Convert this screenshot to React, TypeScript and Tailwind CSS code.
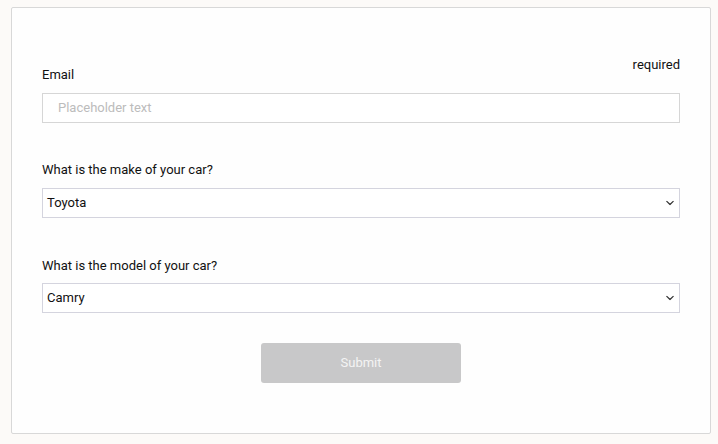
import React from "react";

function Chevron() {
  return (
    <svg width="8" height="5" viewBox="0 0 8 5" fill="none" className="absolute right-[5px] top-1/2 -translate-y-1/2">
      <path d="M0.8 0.8l3.2 3.2 3.2-3.2" stroke="#333" strokeWidth="1.2" strokeLinecap="round" strokeLinejoin="round" />
    </svg>
  );
}

function SelectBox({ value }: { value: string }) {
  return (
    <div className="relative h-[30px] w-full border border-[#d4d4de] bg-white flex items-center pl-[4px] text-[13px] text-[#111]">
      {value}
      <Chevron />
    </div>
  );
}

export default function App() {
  return (
    <div
      className="w-[718px] h-[444px] bg-[#fcfaf8] pt-[7px] pl-[11px]"
      style={{ fontFamily: "Roboto, 'Liberation Sans', sans-serif" }}
    >
      <div className="w-[700px] h-[427px] bg-[#fefefe] border border-[#d8d8d8] rounded-[2px] pt-[49px] px-[30px]">
        <div className="flex justify-between items-start">
          <span className="pt-[10px] text-[13px] leading-4 text-[#111]">Email</span>
          <span className="text-[13px] leading-4 text-[#111]">required</span>
        </div>
        <div className="mt-[10px] h-[30px] border border-[#d6d6d6] bg-white flex items-center pl-[15px] text-[13px] text-[#bcbcbc]">
          Placeholder text
        </div>

        <div className="mt-[39px] text-[13px] leading-4 text-[#111]">What is the make of your car?</div>
        <div className="mt-[10px]">
          <SelectBox value="Toyota" />
        </div>

        <div className="mt-[40px] text-[13px] leading-4 text-[#111]">What is the model of your car?</div>
        <div className="mt-[9px]">
          <SelectBox value="Camry" />
        </div>

        <div className="mt-[30px] flex justify-center">
          <button className="w-[200px] h-[40px] rounded-[3px] bg-[#c8c8c9] text-[13px] text-[#f4f4f4]">
            Submit
          </button>
        </div>
      </div>
    </div>
  );
}
